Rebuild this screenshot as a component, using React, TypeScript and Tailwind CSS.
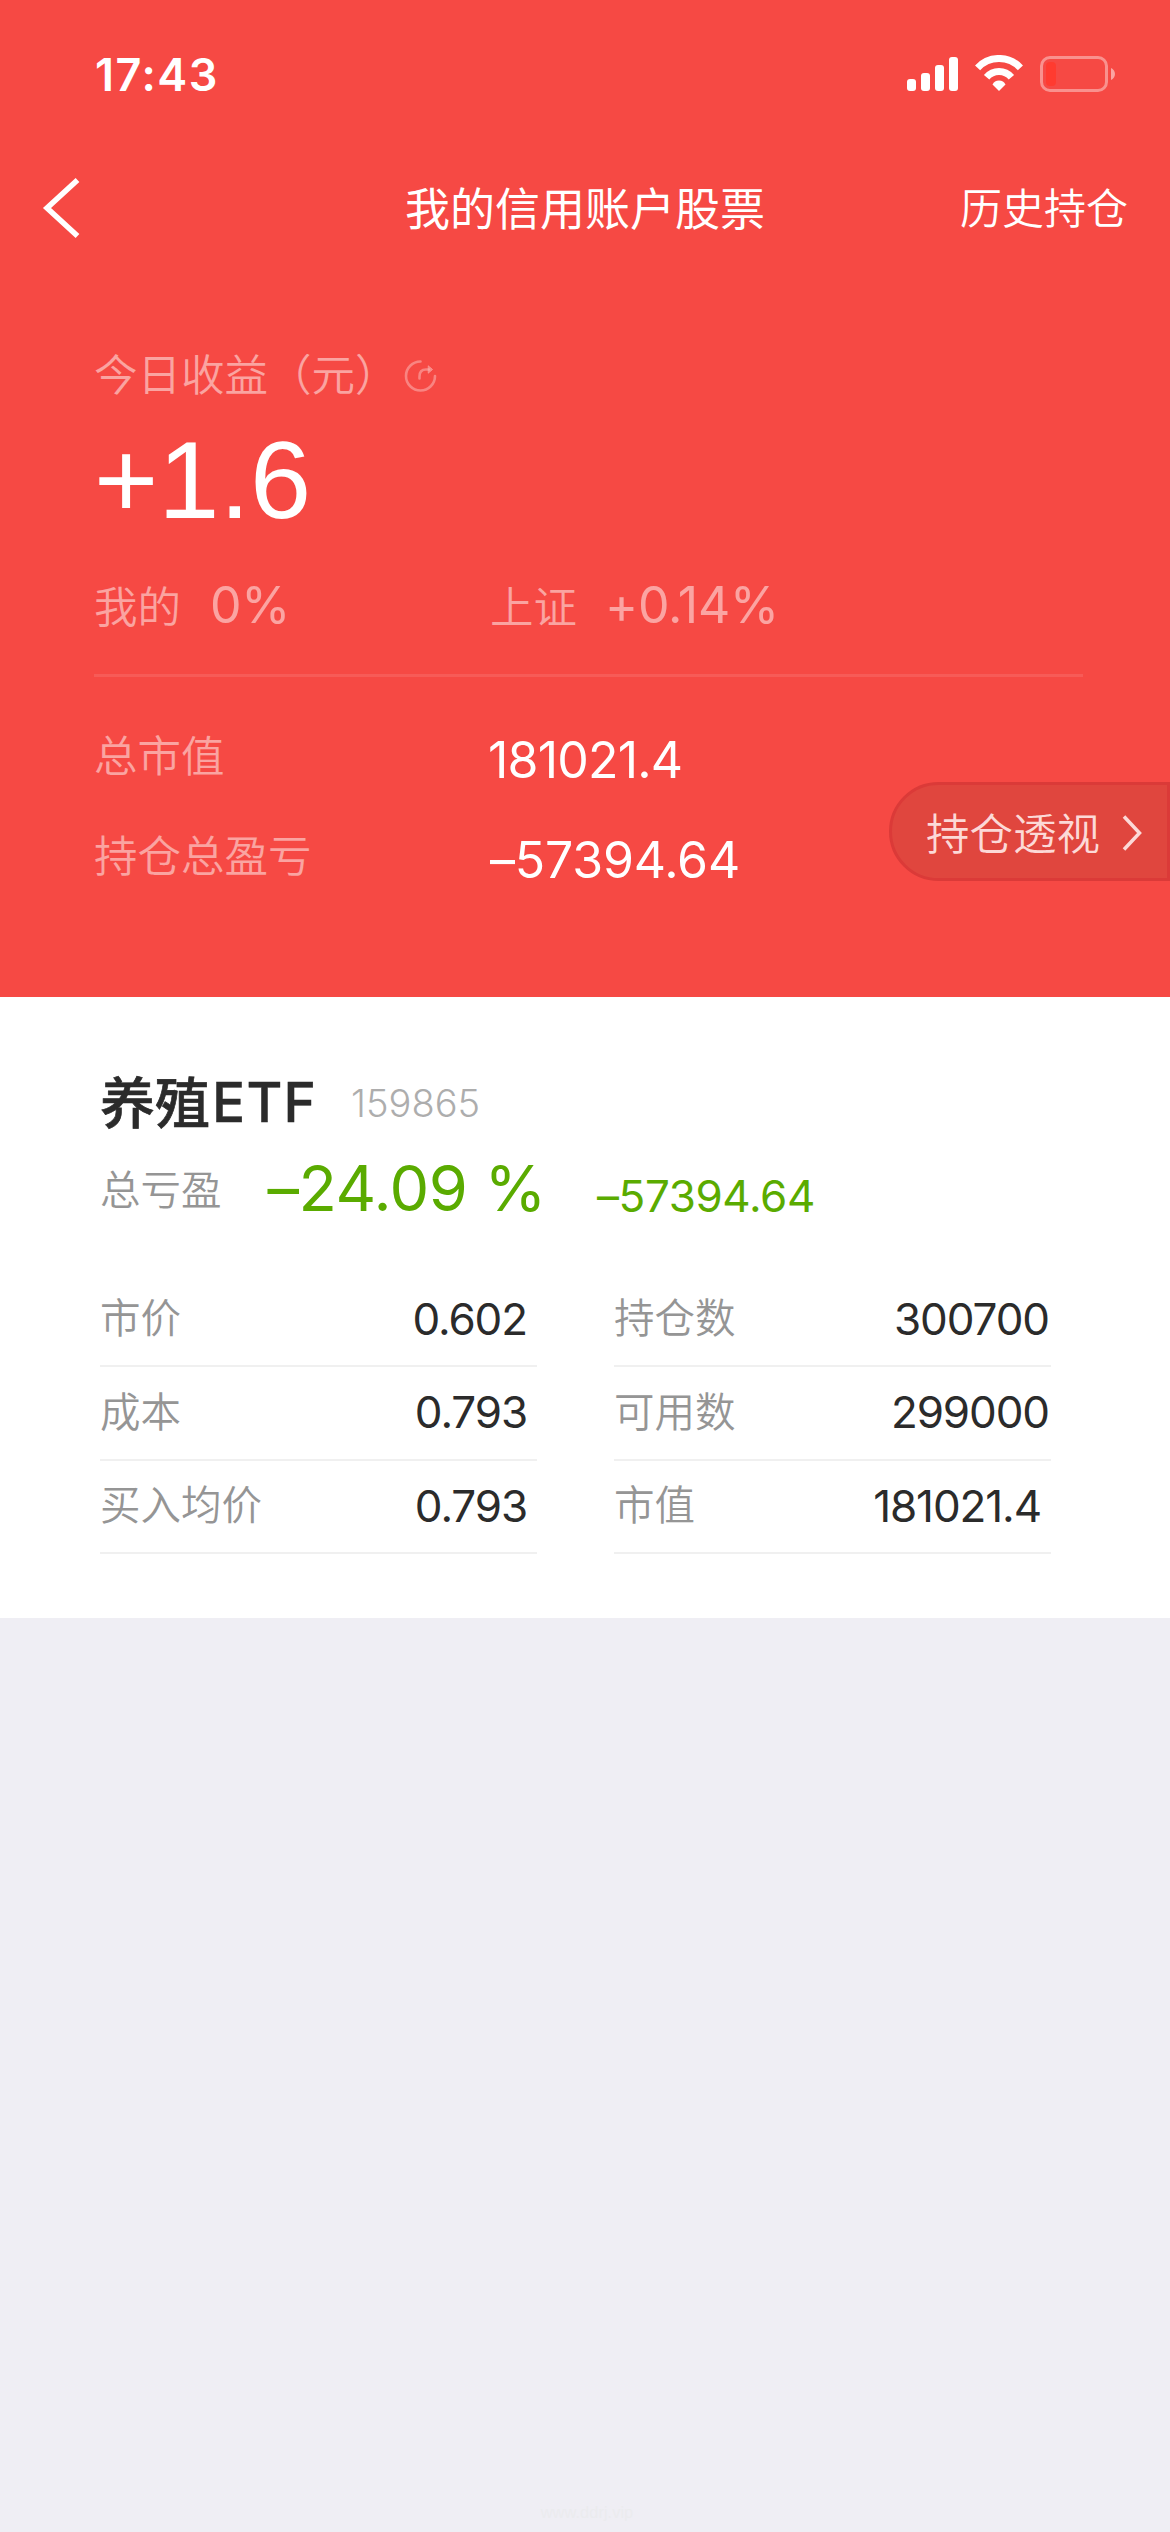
import React from "react";

interface Row {
    label: string;
    value: string;
    className?: string;
}

const leftRows: Row[] = [
    { label: "市价", value: "0.602", className: "pr-[10px]" },
    { label: "成本", value: "0.793", className: "pr-[10px]" },
    { label: "买入均价", value: "0.793", className: "pr-[10px]" },
];

const rightRows: Row[] = [
    { label: "持仓数", value: "300700", className: "pr-0.5" },
    { label: "可用数", value: "299000", className: "pr-0.5" },
    { label: "市值", value: "181021.4", className: "pr-[10px]" },
];

const StatusBar: React.FC = () => (
    <div className="flex h-[148px] items-center justify-between pr-[55px] pl-[95px] text-white">
        <span className="pt-px font-[Inter,sans-serif] text-[45px] leading-none font-semibold tracking-[1.5px]">17:43</span>
        <div className="flex items-center gap-[17px]">
            {/* Signal */}
            <svg width="51" height="34" viewBox="0 0 51 34" fill="currentColor">
                <rect x="0" y="22" width="9" height="12" rx="3" />
                <rect x="14" y="16" width="9" height="18" rx="3" />
                <rect x="28" y="8" width="9" height="26" rx="3" />
                <rect x="42" y="0" width="9" height="34" rx="3" />
            </svg>
            {/* Wifi */}
            <svg width="48" height="36" viewBox="0 0 48 36" fill="none" stroke="currentColor" strokeWidth="7" className="mb-0.5">
                <path d="M2.6 12.8A29.2 29.2 0 0 1 45.4 12.8" />
                <path d="M11.6 22.3A16.2 16.2 0 0 1 36.4 22.3" />
                <path d="M24 36L17.5 29.5A7.2 7.2 0 0 1 30.5 29.5Z" fill="currentColor" stroke="none" />
            </svg>
            {/* Battery */}
            <svg width="75" height="36" viewBox="0 0 75 36" fill="none">
                <rect x="1.5" y="1.5" width="65" height="33" rx="8.5" stroke="#fff" strokeOpacity="0.4" strokeWidth="3" />
                <rect x="6" y="6" width="10" height="24" rx="4" fill="#ff3b30" />
                <path d="M71 12C73.5 13 75 15.5 75 18C75 20.5 73.5 23 71 24Z" fill="#fff" fillOpacity="0.5" />
            </svg>
        </div>
    </div>
);

const NavBar: React.FC = () => (
    <div className="flex h-[120px] items-center justify-between px-[42px] text-white">
        <div className="w-[168px]">
            <svg width="38" height="62" viewBox="0 0 38 62" fill="none" stroke="currentColor" strokeWidth="5.5">
                <path d="M35.5 3L5 31L35.5 59" />
            </svg>
        </div>
        <h1 className="pb-1 text-[45px] leading-none font-normal">我的信用账户股票</h1>
        <span className="pb-[5px] text-[42px] leading-none font-[350]">历史持仓</span>
    </div>
);

const Summary: React.FC = () => (
    <div className="px-[94px] pt-[74px]">
        <div className="flex h-16 items-center text-white/50">
            <span className="pb-[3px] text-[43.5px] leading-none font-[350]">今日收益（元）</span>
            <svg width="34" height="34" viewBox="0 0 34 34" fill="none" stroke="currentColor" strokeWidth="2.6" strokeLinecap="round" className="mt-1 ml-1 opacity-65">
                <path d="M17.5 2.5A14.5 14.5 0 1 0 32 17" />
                <path d="M16.5 19.5V17.5C16.5 13 18.5 10.5 23 10.5H26" />
                <path d="M25.5 7L29.5 10.5L25.5 14Z" fill="currentColor" strokeWidth="1" strokeLinejoin="round" />
            </svg>
        </div>
        <div className="flex h-[148px] items-center text-white">
            <span className="font-['Liberation_Sans',sans-serif] text-[110px] leading-none">+1.6</span>
        </div>
        <div className="flex h-[104px] items-center pb-[3px] text-white/50">
            <div className="flex w-[396px] items-center gap-[29px]">
                <span className="text-[43.5px] leading-none font-[350]">我的</span>
                <span className="font-[Inter,sans-serif] text-[50px] leading-none tracking-[-0.3px]">0%</span>
            </div>
            <div className="flex items-center gap-7">
                <span className="text-[43.5px] leading-none font-[350]">上证</span>
                <span className="font-[Inter,sans-serif] text-[50px] leading-none tracking-[-0.2px]">+0.14%</span>
            </div>
        </div>
        <div className="mt-4 h-[3px] w-[989px] bg-white/10" />
        <div className="mt-7 flex h-[100px] items-center">
            <span className="w-[396px] pb-[3px] text-[43.5px] leading-none font-[350] text-white/50">总市值</span>
            <span className="-ml-0.5 pt-[9px] font-[Inter,sans-serif] text-[50px] leading-none tracking-[-0.8px] text-white">181021.4</span>
        </div>
        <div className="flex h-[100px] items-center">
            <span className="w-[396px] pb-[3px] text-[43.5px] leading-none font-[350] text-white/50">持仓总盈亏</span>
            <span className="pt-[10px] font-[Inter,sans-serif] text-[50px] leading-none tracking-[-0.2px] text-white">–57394.64</span>
        </div>
    </div>
);

const DataColumn: React.FC<{ rows: Row[] }> = ({ rows }) => (
    <div className="w-[437px]">
        {rows.map((row) => (
            <div key={row.label} className="flex h-[93.5px] items-center justify-between border-b-2 border-[#f0f0f0]">
                <span className="pb-1.5 text-[40.5px] leading-none font-[350] text-[#959595]">{row.label}</span>
                <span className={`pb-px font-[Inter,sans-serif] text-[44px] leading-none tracking-[-1.1px] text-[#2b2b2b] ${row.className}`}>
                    {row.value}
                </span>
            </div>
        ))}
    </div>
);

const Holding: React.FC = () => (
    <div className="h-[621px] bg-white px-[100px] pt-[60px]">
        <div className="flex h-[84px] items-center">
            <span className="text-[55px] leading-none font-medium text-[#2b2b2b] [-webkit-text-stroke:0.7px]">养殖</span>
            <span className="ml-0.5 pt-[7px] font-[Inter,sans-serif] text-[55px] leading-none font-medium tracking-[1.2px] text-[#2b2b2b] [-webkit-text-stroke:0.4px]">ETF</span>
            <span className="ml-[34px] pt-2 font-[Inter,sans-serif] text-[38px] leading-none font-light text-[#adadad]">159865</span>
        </div>
        <div className="flex h-[94px] items-center">
            <span className="text-[40.5px] leading-none font-[350] text-[#959595]">总亏盈</span>
            <span className="ml-[46px] font-[Inter,sans-serif] text-[63px] leading-none tracking-[-0.5px] text-[#5aab00]">–24.09 %</span>
            <span className="ml-[51px] pt-4 font-[Inter,sans-serif] text-[44px] leading-none tracking-[-0.4px] text-[#5aab00]">–57394.64</span>
        </div>
        <div className="mt-[38.5px] flex gap-[77px]">
            <DataColumn rows={leftRows} />
            <DataColumn rows={rightRows} />
        </div>
    </div>
);

const App: React.FC = () => {
    return (
        <div className="relative flex h-[2532px] w-[1170px] flex-col bg-[#efeef4] font-['Noto_Sans_CJK_SC',sans-serif]">
            <div className="h-[997px] bg-[#f64944]">
                <StatusBar />
                <NavBar />
                <Summary />
            </div>
            <Holding />

            <div className="mt-auto pb-3 pl-[4px] text-center font-['Liberation_Sans',sans-serif] text-[16.5px] leading-none text-[#ebebee]">
                www.ddrj.vip
            </div>

            {/* Floating entry on the right edge */}
            <button className="absolute top-[782px] right-0 flex h-[99px] w-[281px] items-center rounded-l-full border-[3px] border-[#db3a38] bg-[#e0463e] pl-[34px] text-[#fcd9d7]">
                <span className="text-[43.5px] leading-none font-[350]">持仓透视</span>
                <svg width="20" height="36" viewBox="0 0 20 36" fill="none" stroke="currentColor" strokeWidth="3.5" className="mt-[3px] ml-[22px]">
                    <path d="M2 1.5L17.5 18L2 34.5" />
                </svg>
            </button>
        </div>
    );
};

export default App;
